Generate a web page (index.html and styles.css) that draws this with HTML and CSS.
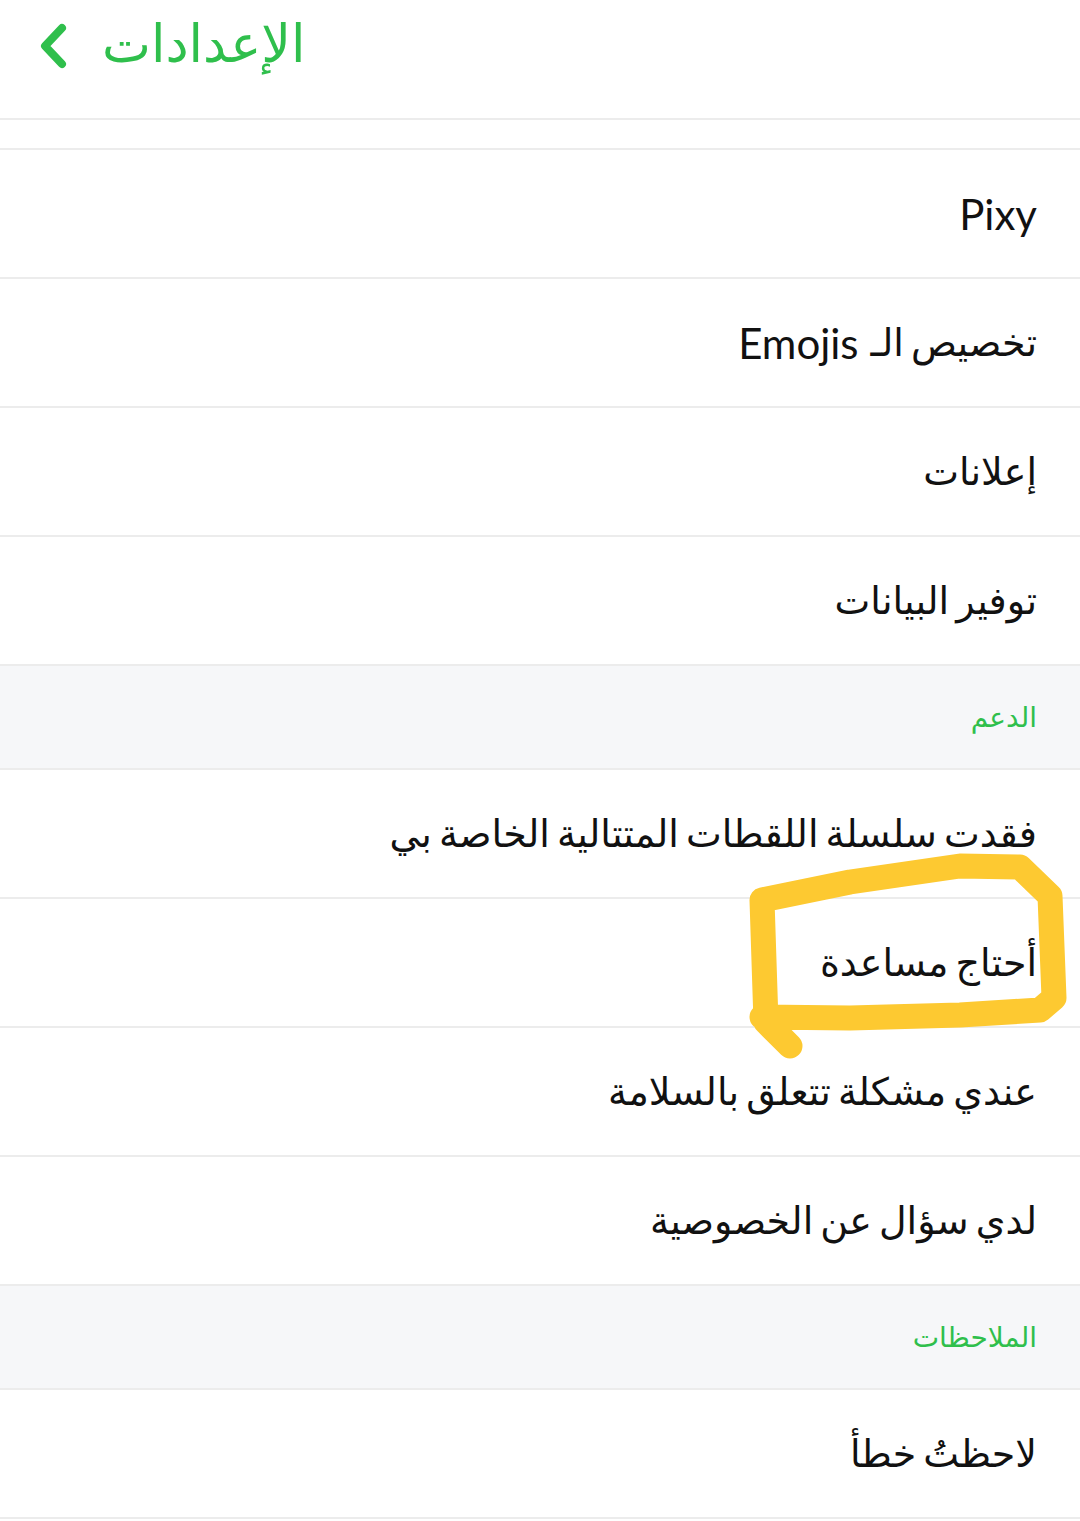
FILE: index.html
```html
<!DOCTYPE html>
<html lang="ar" dir="rtl">
<head>
<meta charset="utf-8">
<link rel="stylesheet" href="styles.css">
</head>
<body>
<div class="page">
  <header class="topbar">
    <svg class="back" width="30" height="46" viewBox="0 0 30 46"><path d="M24 5 L7 23 L24 41" fill="none" stroke="#2fbf4c" stroke-width="8" stroke-linecap="round" stroke-linejoin="round"/></svg>
    <h1 class="title">الإعدادات</h1>
  </header>
  <div class="spacer"></div>
  <div class="row"><span class="latin">Pixy</span></div>
  <div class="row">تخصيص الـ<span class="latin emojis">Emojis</span></div>
  <div class="row">إعلانات</div>
  <div class="row">توفير البيانات</div>
  <div class="section">الدعم</div>
  <div class="row">فقدت سلسلة اللقطات المتتالية الخاصة بي</div>
  <div class="row">أحتاج مساعدة</div>
  <div class="row">عندي مشكلة تتعلق بالسلامة</div>
  <div class="row">لدي سؤال عن الخصوصية</div>
  <div class="section">الملاحظات</div>
  <div class="row">لاحظتُ خطأ</div>
  <svg class="mark" width="1080" height="1521" viewBox="0 0 1080 1521"><path d="M790 1046 L766 1022 L762 900 L850 882 L960 866 L1020 867 L1050 896 L1054 998 L1040 1010 L960 1015 L850 1018 L762 1017" fill="none" stroke="#fdc931" stroke-width="25" stroke-linecap="round" stroke-linejoin="round"/></svg>
</div>
</body>
</html>
```
FILE: styles.css
```css
html, body { margin: 0; padding: 0; background: #fff; }
body { font-family: "Lato", "DejaVu Sans", sans-serif; color: #111; }
.page { position: relative; width: 1080px; height: 1521px; overflow: hidden; }
.topbar { direction: ltr; display: flex; align-items: center; height: 120px; padding-left: 38px; box-sizing: border-box; border-bottom: 2px solid #ececec; }
.back { display: block; margin-top: -26px; }
.title { margin: -30px 0 0 34px; font-weight: normal; font-size: 52px; color: #2fbf4c; font-family: "DejaVu Sans", sans-serif; direction: rtl; }
.spacer { height: 28px; border-bottom: 2px solid #ececec; }
.row { height: 127px; border-bottom: 2px solid #ececec; display: flex; align-items: center; padding-right: 43px; font-size: 38px; word-spacing: -5px; font-family: "DejaVu Sans", sans-serif; }
.row .latin { font-family: "Lato", sans-serif; font-size: 42px; word-spacing: 0; }
.row .emojis { margin-right: 12px; }
.section { height: 102px; background: #f6f7f9; border-bottom: 2px solid #ececec; display: flex; align-items: center; padding-right: 43px; font-size: 28px; color: #2fbf4c; font-family: "DejaVu Sans", sans-serif; }
.mark { position: absolute; left: 0; top: 0; pointer-events: none; }
```
